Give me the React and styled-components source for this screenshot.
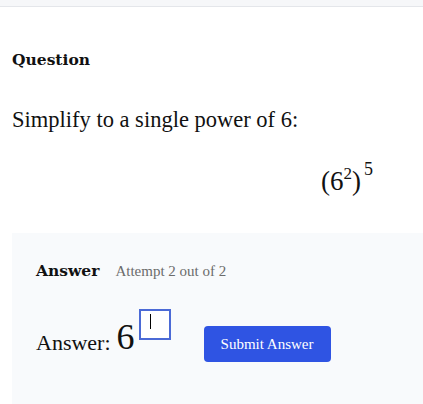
import React from "react";
import styled, { createGlobalStyle } from "styled-components";

const Global = createGlobalStyle`
  html, body { margin: 0; padding: 0; background: #fff; overflow: hidden; }
  body { font-family: Georgia, "Liberation Serif", "DejaVu Serif", serif; color: #111; }
`;

const TopBar = styled.div`
  height: 6px;
  background: #f6f7f9;
  border-bottom: 1px solid #e4e6ea;
`;

const Page = styled.main`
  padding: 0 0 0 12px;
`;

const SectionTitle = styled.h2`
  margin: 0;
  font-family: Georgia, "DejaVu Serif", serif;
  font-size: 15.5px;
  font-weight: 700;
  line-height: 20px;
  color: #111;
`;

const QuestionTitle = styled(SectionTitle)`
  padding-top: 43px;
`;

const Prompt = styled.p`
  margin: 36px 0 0;
  font-size: 22.5px;
  line-height: 28px;
`;

const MathBlock = styled.div`
  width: 670px;
  margin-top: 29px;
  display: flex;
  justify-content: center;
  font-family: "Liberation Serif", "DejaVu Serif", serif;
  font-size: 27px;
  line-height: 36px;
`;

const Sup = styled.sup`
  font-size: ${(p) => p.$size || 17}px;
  position: relative;
  top: ${(p) => p.$lift || 0}px;
  vertical-align: baseline;
  margin-left: ${(p) => p.$gap || 0}px;
`;

const Panel = styled.section`
  margin-top: 30px;
  background: #f8fafc;
  padding: 28px 24px 40px;
  min-height: 200px;
`;

const PanelHeader = styled.div`
  display: flex;
  align-items: baseline;
  gap: 16px;
`;

const Attempt = styled.span`
  font-size: 15px;
  color: #6b6b6b;
`;

const AnswerRow = styled.div`
  margin-top: 28px;
  display: flex;
  align-items: flex-start;
`;

const AnswerLabel = styled.span`
  font-size: 22px;
  line-height: 26px;
  margin-top: 21px;
`;

const Base = styled.span`
  font-family: "Liberation Serif", "DejaVu Serif", serif;
  font-size: 36px;
  line-height: 40px;
  margin-left: 6px;
  margin-top: 8px;
`;

const ExpInput = styled.div`
  box-sizing: border-box;
  width: 32px;
  height: 31px;
  border: 2px solid #4b6ad6;
  background: #fff;
  margin-left: 4px;
  display: flex;
  align-items: center;
  padding-left: 9px;
`;

const Caret = styled.span`
  display: block;
  width: 1px;
  height: 15px;
  background: #000;
  margin-top: -6px;
`;

const SubmitButton = styled.button`
  margin-left: 33px;
  margin-top: 17px;
  width: 127px;
  height: 36px;
  border: none;
  border-radius: 4px;
  background: #2f54e3;
  color: #fff;
  font-family: Georgia, "Liberation Serif", "DejaVu Serif", serif;
  font-size: 15px;
  cursor: pointer;
`;

export default function App() {
  return (
    <>
      <Global />
      <TopBar />
      <Page>
        <QuestionTitle>Question</QuestionTitle>
        <Prompt>Simplify to a single power of 6:</Prompt>
        <MathBlock>
          <span>
            (6<Sup $size={17} $lift={-11}>2</Sup>)<Sup $size={18} $lift={-15} $gap={3}>5</Sup>
          </span>
        </MathBlock>
        <Panel>
          <PanelHeader>
            <SectionTitle as="h3">Answer</SectionTitle>
            <Attempt>Attempt 2 out of 2</Attempt>
          </PanelHeader>
          <AnswerRow>
            <AnswerLabel>Answer:</AnswerLabel>
            <Base>6</Base>
            <ExpInput>
              <Caret />
            </ExpInput>
            <SubmitButton>Submit Answer</SubmitButton>
          </AnswerRow>
        </Panel>
      </Page>
    </>
  );
}
